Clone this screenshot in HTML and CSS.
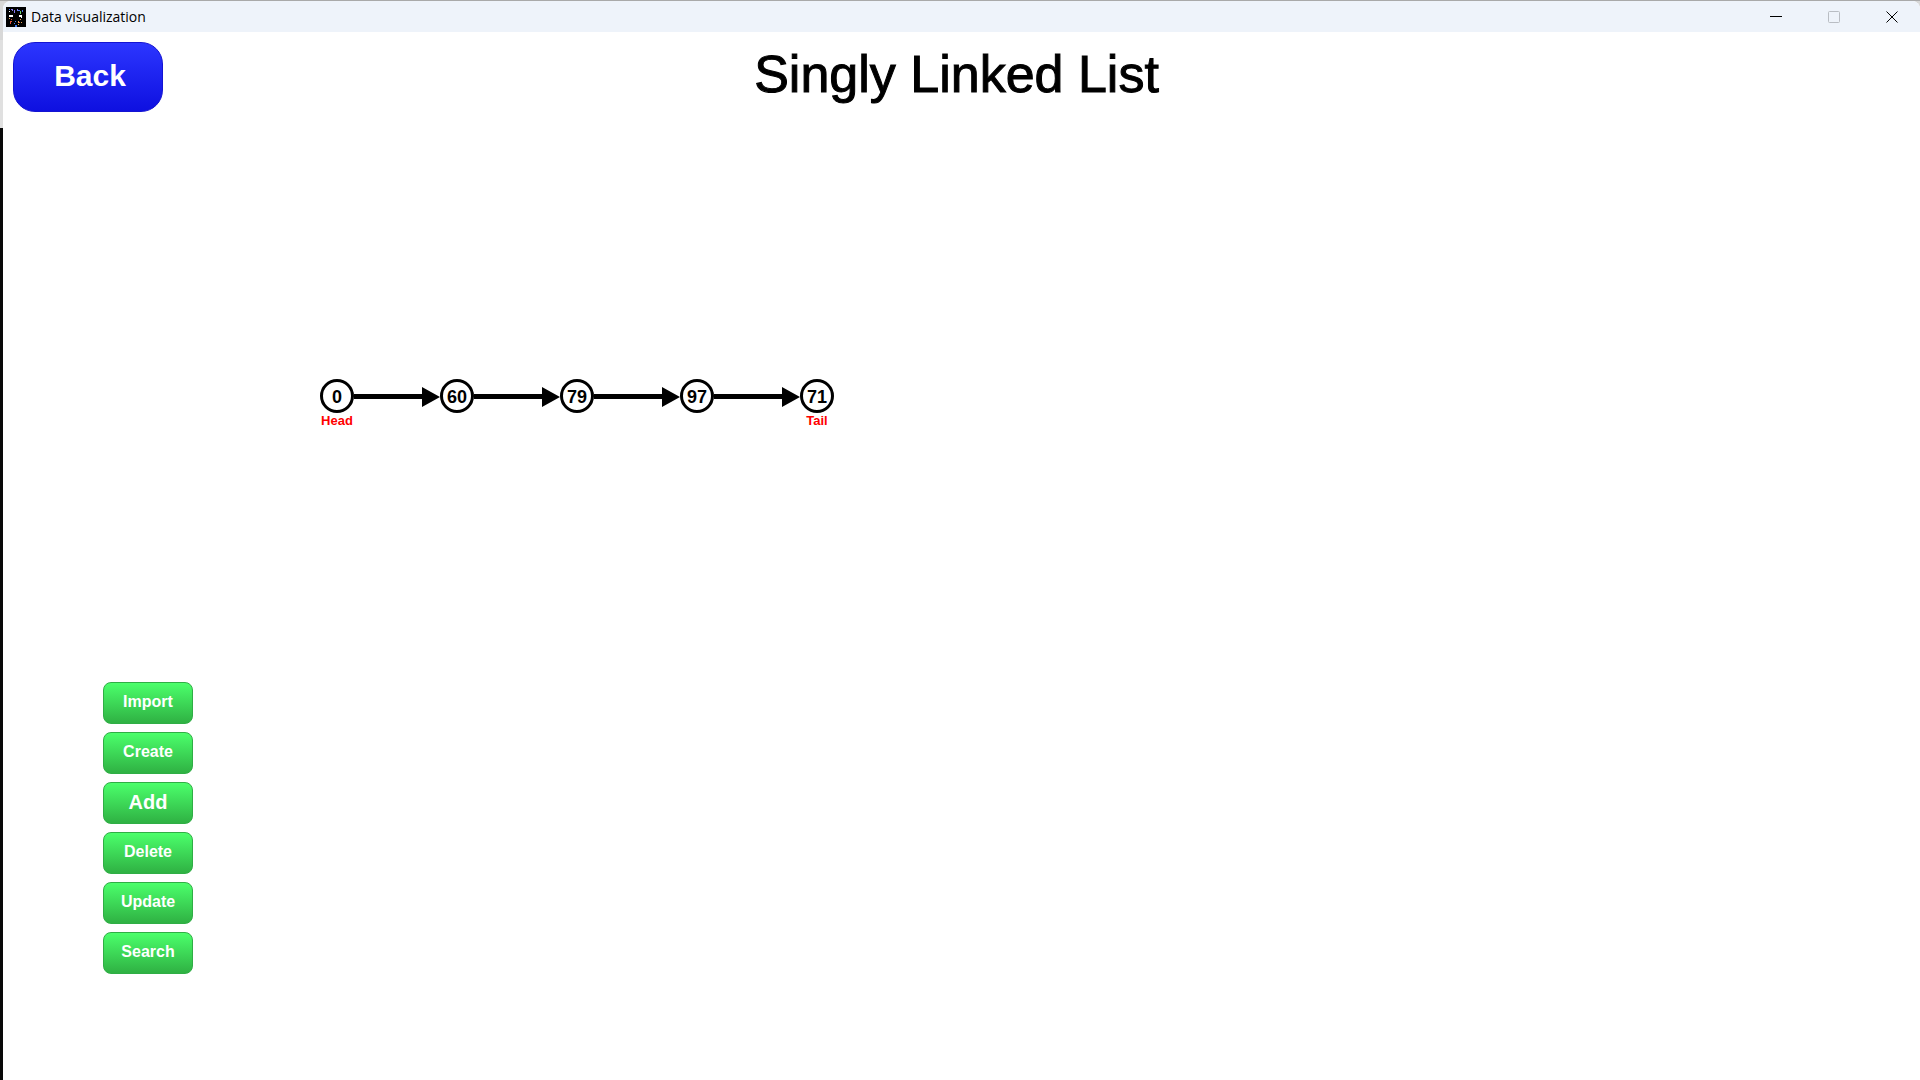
FILE: index.html
```html
<!DOCTYPE html>
<html lang="en">
<head>
<meta charset="utf-8">
<title>Data visualization</title>
<link rel="stylesheet" href="styles.css">
</head>
<body>
<div class="window">
  <header class="titlebar">
    <svg class="app-icon" viewBox="0 0 20 20" shape-rendering="crispEdges" aria-hidden="true">
      <path fill="#000" d="M0 0h20v20H0z"/>
      <path fill="#fff" d="M3 8h4v2H3zM13 8h3v2h-3zM15 10h1v1h-1zM3 4h1v1H3z"/>
      <path fill="#4a7df0" d="M3 2h1v1H3zM12 3h2v1h-2zM16 3h1v2h-1zM9 18h2v2H9zM8 16h1v1H8zM9 14h1v1H9z"/>
      <path fill="#8a7bf0" d="M5 2h2v1H5zM6 3h1v1H6zM8 3h1v3H8zM11 2h1v2h-1z"/>
      <path fill="#6fd36a" d="M14 4h1v3h-1z"/>
      <path fill="#e0523a" d="M4 14h2v1H4zM4 15h1v2H4zM5 12h1v1H5zM13 15h1v1h-1z"/>
      <path fill="#e8a55a" d="M3 11h1v1H3zM12 14h1v2h-1zM14 12h1v1h-1zM15 15h1v1h-1zM12 17h1v1h-1z"/>
    </svg>
    <span class="titlebar-text">Data visualization</span>
    <button class="caption-button" aria-label="Minimize"><svg viewBox="0 0 12 12"><path d="M0 5.5h12"/></svg></button>
    <button class="caption-button" aria-label="Maximize" disabled><svg viewBox="0 0 12 12"><rect x=".5" y=".5" width="11" height="11" rx="1"/></svg></button>
    <button class="caption-button" aria-label="Close"><svg viewBox="0 0 12 12"><path d="M.5.5l11 11M11.5.5l-11 11"/></svg></button>
  </header>
  <main class="content">
    <div class="page-head">
      <button class="back-button">Back</button>
      <h1 class="page-title">Singly Linked List</h1>
    </div>
    <ol class="linked-list">
      <li class="item"><div class="node"><span class="value">0</span><span class="label">Head</span></div></li>
      <li class="item"><svg class="arrow" viewBox="0 0 86 20"><path d="M0 7h68V0l18 10-18 10v-8H0z"/></svg><div class="node"><span class="value">60</span></div></li>
      <li class="item"><svg class="arrow" viewBox="0 0 86 20"><path d="M0 7h68V0l18 10-18 10v-8H0z"/></svg><div class="node"><span class="value">79</span></div></li>
      <li class="item"><svg class="arrow" viewBox="0 0 86 20"><path d="M0 7h68V0l18 10-18 10v-8H0z"/></svg><div class="node"><span class="value">97</span></div></li>
      <li class="item"><svg class="arrow" viewBox="0 0 86 20"><path d="M0 7h68V0l18 10-18 10v-8H0z"/></svg><div class="node"><span class="value">71</span><span class="label">Tail</span></div></li>
    </ol>
    <nav class="actions">
      <button class="action">Import</button>
      <button class="action">Create</button>
      <button class="action action-large">Add</button>
      <button class="action">Delete</button>
      <button class="action">Update</button>
      <button class="action">Search</button>
    </nav>
  </main>
</div>
</body>
</html>
```
FILE: styles.css
```css
* { box-sizing: border-box; }

body {
  margin: 0;
  padding: 1px 0 0 3px;
  min-height: 100vh;
  display: flex;
  font-family: "Liberation Sans", Arial, sans-serif;
  color: #000;
  background: linear-gradient(#a9a9a9 1px, #d8d8d8 1px, #d8d8d8 40px, #e0e0e0 40px, #e0e0e0 128px, #080808 128px);
}

button { border: 0; padding: 0; font-family: inherit; cursor: pointer; }

.window {
  flex: 1;
  display: flex;
  flex-direction: column;
  background: #fff;
  border-radius: 8px 8px 0 0;
  overflow: hidden;
}

.titlebar {
  display: flex;
  align-items: center;
  height: 31px;
  padding-left: 3px;
  background: #eef3fa;
}
.app-icon { width: 20px; height: 20px; margin-right: 5px; }
.titlebar-text {
  margin-right: auto;
  font: 14px/20px "Open Sans", "Noto Sans", sans-serif;
}
.caption-button {
  display: flex;
  align-items: center;
  justify-content: center;
  width: 58px;
  height: 31px;
  padding-left: 2px;
  background: none;
}
.caption-button svg { width: 12px; height: 12px; fill: none; stroke: #000; }
.caption-button:disabled svg { stroke: #b9bdc3; }

.content { flex: 1; }

.page-head {
  display: grid;
  grid-template-columns: 150px 1fr 160px;
  padding: 10px 10px 0;
}
.back-button {
  height: 70px;
  padding: 0 0 2px 4px;
  border: 1px solid #1414d2;
  border-radius: 22px;
  background: linear-gradient(#2c36ff, #0e10e0);
  color: #fff;
  font-size: 30px;
  font-weight: bold;
}
.page-title {
  margin: 0;
  font-size: 52px;
  font-weight: normal;
  line-height: 64px;
  text-align: center;
  -webkit-text-stroke: 1px #000;
}

.linked-list {
  display: flex;
  margin: 267px 0 0 317px;
  padding: 0;
  list-style: none;
}
.item { display: flex; align-items: flex-start; }
.node {
  display: flex;
  flex-direction: column;
  align-items: center;
  width: 34px;
  height: 52px;
}
.value {
  width: 34px;
  height: 34px;
  border: 3px solid #000;
  border-radius: 50%;
  font-size: 18px;
  font-weight: bold;
  line-height: 30px;
  text-align: center;
}
.label {
  color: #f00;
  font-size: 13px;
  font-weight: bold;
  line-height: 15px;
}
.arrow { width: 86px; height: 20px; margin-top: 8px; }

.actions {
  display: flex;
  flex-direction: column;
  gap: 8px;
  width: 90px;
  margin: 251px 0 0 100px;
}
.action {
  height: 42px;
  padding-bottom: 2px;
  border: 1px solid #2fae45;
  border-radius: 8px;
  background: linear-gradient(#4bff6b, #2fb143);
  color: #fff;
  font-size: 16px;
  font-weight: bold;
}
.action-large { font-size: 20px; }
```
